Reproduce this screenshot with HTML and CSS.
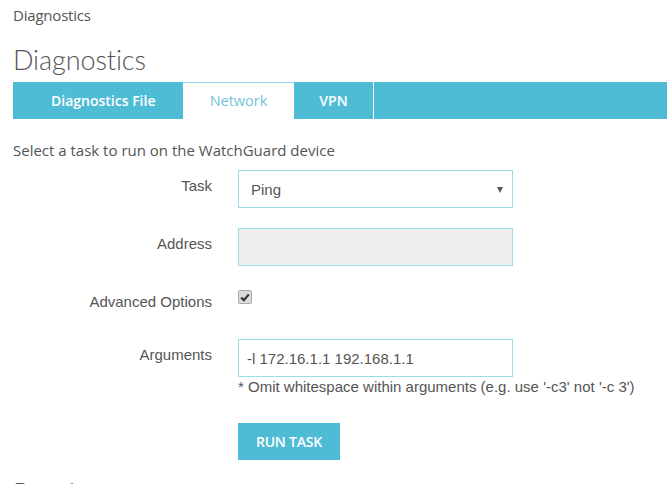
FILE: index.html
```html
<!DOCTYPE html>
<html>
<head>
<meta charset="utf-8">
<link rel="stylesheet" href="styles.css">
</head>
<body>
<div class="page">
  <div class="crumb">Diagnostics</div>
  <h1 class="title">Diagnostics</h1>
  <div class="tabs">
    <div class="tab tab-first">Diagnostics File</div>
    <div class="tab tab-active">Network</div>
    <div class="tab tab-vpn">VPN</div>
  </div>
  <p class="intro">Select a task to run on the WatchGuard device</p>
  <div class="form">
    <div class="row row-task">
      <div class="label">Task</div>
      <div class="field">
        <div class="select"><span>Ping</span><span class="arrow"></span></div>
      </div>
    </div>
    <div class="row row-addr">
      <div class="label">Address</div>
      <div class="field"><div class="input disabled"></div></div>
    </div>
    <div class="row row-check">
      <div class="label">Advanced Options</div>
      <div class="field">
        <div class="checkbox">
          <svg width="10" height="9" viewBox="0 0 10 9"><path d="M1.2 4.6 L3.9 7.2 L8.8 1.4" fill="none" stroke="#333" stroke-width="2.2"/></svg>
        </div>
      </div>
    </div>
    <div class="row row-args">
      <div class="label">Arguments</div>
      <div class="field">
        <div class="input">-l 172.16.1.1 192.168.1.1</div>
        <div class="help">* Omit whitespace within arguments (e.g. use '-c3' not '-c 3')</div>
      </div>
    </div>
    <div class="row row-btn">
      <div class="label"></div>
      <div class="field"><button class="btn">RUN TASK</button></div>
    </div>
  </div>
  <h2 class="results">Results</h2>
</div>
</body>
</html>
```
FILE: styles.css
```css
html, body { margin: 0; padding: 0; background: #fff; }
body { font-family: "Liberation Sans", Arial, sans-serif; color: #555; overflow: hidden; height: 484px; }
.page { padding: 0 0 0 13px; }
.crumb { font-family: "Open Sans", sans-serif; font-size: 15px; line-height: 20px; padding-top: 5px; color: #555; letter-spacing: -0.2px; }
.title { font-family: "Lato", sans-serif; font-weight: 300; font-size: 27px; line-height: 32px; margin: 0; padding-top: 19px; color: #555; letter-spacing: -0.1px; }
.tabs { display: flex; height: 37px; background: #4fbcd6; margin-top: 6px; }
.tab { font-family: "Open Sans", sans-serif; font-size: 14px; font-weight: 600; color: #fff; line-height: 37px; box-sizing: border-box; height: 37px; }
.tab-first { width: 170px; padding-left: 38px; }
.tab-active { width: 111px; background: #fff; color: #74c4d9; font-weight: 400; font-size: 14.5px; text-align: center; border-top: 1px solid #8fd3e4; line-height: 35px; }
.tab-vpn { width: 80px; text-align: center; border-right: 1px solid #fff; }
.intro { font-family: "Open Sans", sans-serif; font-size: 15px; margin: 21px 0 0; line-height: 20px; color: #555; }
.form { margin-top: 10px; }
.row { display: flex; }
.label { width: 199px; text-align: right; font-size: 15px; line-height: 17px; padding-top: 7px; color: #555; flex-shrink: 0; }
.field { margin-left: 26px; }
.select, .input { width: 275px; height: 38px; box-sizing: border-box; border: 1px solid #9bdde8; font-size: 15px; color: #555; display: flex; align-items: center; }
.select { padding: 0 9px 0 12px; justify-content: space-between; }
.arrow { width: 0; height: 0; border-left: 3.5px solid transparent; border-right: 3.5px solid transparent; border-top: 6px solid #555; margin-top: 2px; }
.input { padding: 0 8px; }
.input.disabled { background: #eeeeee; }
.row-addr { margin-top: 20px; }
.row-check { margin-top: 24px; }
.row-check .label { padding-top: 3px; }
.checkbox { width: 12px; height: 12px; border: 1px solid #aaa; border-radius: 2px; background: #dcdcdc; display: flex; align-items: center; justify-content: center; }
.row-args { margin-top: 29px; }
.help { font-size: 15px; margin-top: 1px; line-height: 17px; color: #555; }
.row-btn { margin-top: 28px; }
.btn { width: 102px; height: 37px; border: none; background: #4fbcd6; color: #fff; font-family: "Open Sans", sans-serif; font-weight: 600; font-size: 14px; letter-spacing: -0.2px; padding: 0; display: block; }
.results { font-family: "Lato", sans-serif; font-weight: 300; font-size: 27px; line-height: 32px; margin: 17px 0 0; color: #555; }
```
